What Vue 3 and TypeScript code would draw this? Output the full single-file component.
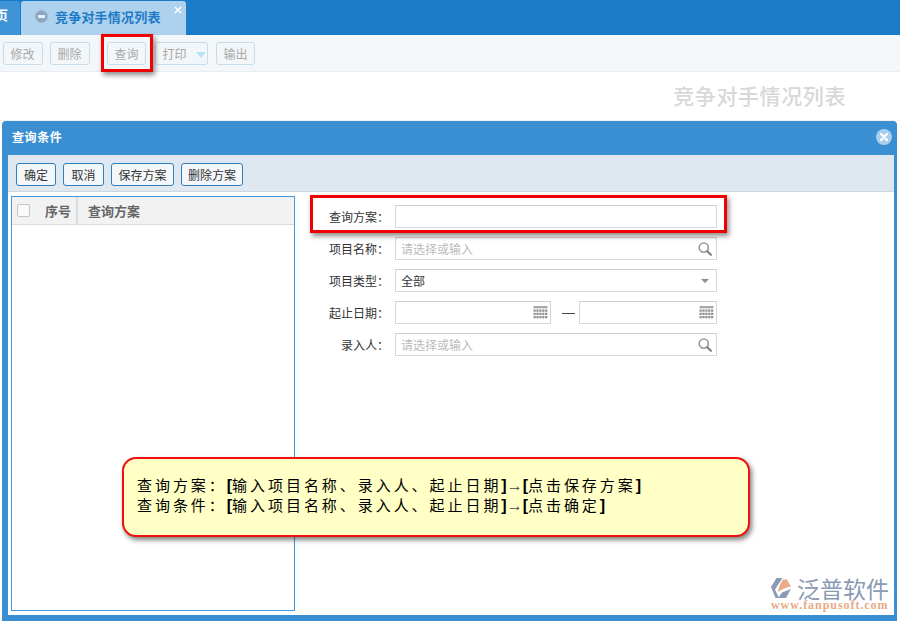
<script setup lang="ts">
const topButtons = [
  { label: '修改', width: 40, gap: 7 },
  { label: '删除', width: 40, gap: 17 },
  { label: '查询', width: 39, gap: 9 },
  { label: '打印', width: 53, gap: 8, arrow: true },
  { label: '输出', width: 39, gap: 0 },
]
const dialogButtons = [
  { label: '确定', width: 40 },
  { label: '取消', width: 41 },
  { label: '保存方案', width: 63 },
  { label: '删除方案', width: 62 },
]
const notes = [
  { head: '查询方案：', body: '输入项目名称、录入人、起止日期', action: '点击保存方案' },
  { head: '查询条件：', body: '输入项目名称、录入人、起止日期', action: '点击确定' },
]
</script>

<template>
  <div class="screen">
    <header class="tabbar">
      <div class="tab-home">页</div>
      <div class="tab-active">
        <span class="tab-dot"><i></i></span>
        <span class="tab-title">竞争对手情况列表</span>
        <svg class="tab-x" width="8" height="8" viewBox="0 0 8 8"><path d="M1 1l6 6M7 1l-6 6" stroke="#fff" stroke-width="1.6" /></svg>
      </div>
    </header>

    <div class="toolbar">
      <button
        v-for="b in topButtons"
        :key="b.label"
        class="tool-btn"
        :style="{ width: b.width + 'px', marginRight: b.gap + 'px' }"
      >
        {{ b.label }}<i v-if="b.arrow" class="tool-arrow"></i>
      </button>
    </div>

    <div class="page-head"><h1>竞争对手情况列表</h1></div>

    <section class="dialog">
      <div class="dialog-title">
        <span>查询条件</span>
        <svg width="16" height="16" viewBox="0 0 16 16">
          <circle cx="8" cy="8" r="8" fill="#a9cfee" />
          <path d="M5 5l6 6M11 5l-6 6" stroke="#fff" stroke-width="2.2" stroke-linecap="round" />
        </svg>
      </div>
      <div class="dialog-body">
        <div class="dialog-tools">
          <button v-for="b in dialogButtons" :key="b.label" class="dlg-btn" :style="{ width: b.width + 'px' }">{{ b.label }}</button>
        </div>
        <div class="dialog-main">
          <div class="plan-table">
            <div class="plan-head">
              <span class="col-check"><i></i><b>序号</b></span>
              <span class="col-name">查询方案</span>
            </div>
          </div>
          <form class="form">
            <div class="row">
              <label>查询方案：</label>
              <div class="field wide"></div>
            </div>
            <div class="row">
              <label>项目名称：</label>
              <div class="field wide hint">
                请选择或输入
                <svg class="end" width="16" height="16" viewBox="0 0 16 16"><circle cx="6.8" cy="6.6" r="4.6" fill="#fff" stroke="#9a9a9a" stroke-width="1.6" /><path d="M10.3 10.2l3.6 3.6" stroke="#808080" stroke-width="2.2" stroke-linecap="round" /></svg>
              </div>
            </div>
            <div class="row">
              <label>项目类型：</label>
              <div class="field wide">
                全部
                <i class="select-arrow"></i>
              </div>
            </div>
            <div class="row">
              <label>起止日期：</label>
              <div class="field date-a">
                <svg class="end cal" width="15" height="14" viewBox="0 0 15 15"><rect x="0" y="0" width="15" height="2.500" fill="#a8a8a8" /><path d="M0 5h15M0 8.400h15M0 11.800h15" stroke="#8f8f8f" stroke-width="2.400" stroke-dasharray="2.400 .7" /></svg>
              </div>
              <span class="dash"></span>
              <div class="field date-b">
                <svg class="end cal" width="15" height="14" viewBox="0 0 15 15"><rect x="0" y="0" width="15" height="2.500" fill="#a8a8a8" /><path d="M0 5h15M0 8.400h15M0 11.800h15" stroke="#8f8f8f" stroke-width="2.400" stroke-dasharray="2.400 .7" /></svg>
              </div>
            </div>
            <div class="row">
              <label>录入人：</label>
              <div class="field wide hint">
                请选择或输入
                <svg class="end" width="16" height="16" viewBox="0 0 16 16"><circle cx="6.8" cy="6.6" r="4.6" fill="#fff" stroke="#9a9a9a" stroke-width="1.6" /><path d="M10.3 10.2l3.6 3.6" stroke="#808080" stroke-width="2.2" stroke-linecap="round" /></svg>
              </div>
            </div>
          </form>
        </div>
      </div>
    </section>

    <div class="mark mark-query"></div>
    <div class="mark mark-plan"></div>

    <aside class="callout">
      <p v-for="n in notes" :key="n.head">{{ n.head }}<b>[</b>{{ n.body }}<b>]</b><span class="arrow">→</span><b>[</b>{{ n.action }}<b>]</b></p>
    </aside>

    <div class="logo">
      <div class="logo-top">
        <svg width="24" height="23" viewBox="0 0 24 23">
          <path d="M0 10L5.500 1H11.500L4 12.500L8 21H4.500Z" fill="#8b9bb4" />
          <path d="M12 2.500H16L20 9.500Q13 10.500 7 15Q8 8 12 2.500Z" fill="#e9ab8a" />
          <path d="M11 15.500L20 12L15 21H7Z" fill="#8b9bb4" />
        </svg>
        <span>泛普软件</span>
      </div>
      <div class="logo-url">www.fanpusoft.com</div>
    </div>
  </div>
</template>

<style>
html, body { margin: 0; padding: 0; background: #fff; overflow: hidden; }
</style>

<style scoped>
.screen {
  position: relative;
  width: 900px;
  height: 622px;
  overflow: hidden;
  background: #fff;
  font-family: "Noto Sans CJK SC", "Liberation Sans", sans-serif;
  font-size: 12px;
  color: #333;
}
.tabbar {
  display: flex;
  height: 35px;
  background: #1a7bc8;
}
.tab-home {
  width: 20px;
  margin-top: 1px;
  padding-top: 6px;
  box-sizing: border-box;
  background: #3f94d8;
  border-radius: 0 3px 0 0;
  color: #fff;
  font-size: 13px;
  font-weight: 700;
  line-height: 16px;
  text-indent: -5px;
  overflow: hidden;
}
.tab-active {
  position: relative;
  display: flex;
  align-items: center;
  width: 165px;
  margin: 1px 0 0 1px;
  background: #aed1ee;
  border-radius: 3px 3px 0 0;
  padding: 0 0 4px 14px;
  box-sizing: border-box;
  height: 34px;
}
.tab-dot {
  display: flex;
  align-items: center;
  justify-content: center;
  width: 11px;
  height: 11px;
  border-radius: 50%;
  background: #8ba6c2;
  border: 1px solid #9eb6cf;
  margin-right: 7px;
}
.tab-dot i {
  display: block;
  width: 7px;
  height: 3px;
  background: #e8f1f9;
}
.tab-title {
  color: #1c7ac6;
  font-size: 13px;
  font-weight: 700;
  letter-spacing: .2px;
}
.tab-x {
  position: absolute;
  top: 5px;
  right: 4px;
}
.toolbar {
  display: flex;
  align-items: center;
  height: 37px;
  padding: 1px 0 0 3px;
  box-sizing: border-box;
  background: #f4f7fa;
  border-bottom: 1px solid #e8edf2;
}
.tool-btn {
  display: flex;
  align-items: center;
  height: 23px;
  padding: 0 0 0 6.500px;
  box-sizing: border-box;
  border: 1px solid #c8dbe9;
  border-radius: 3px;
  background: #f4f7fa;
  color: #a8a8a8;
  font: inherit;
  font-size: 12px;
}
.tool-arrow {
  width: 0;
  height: 0;
  margin: 2px 0 0 9px;
  border-left: 5px solid transparent;
  border-right: 5px solid transparent;
  border-top: 6px solid #b5e3f7;
}
.page-head {
  display: flex;
  justify-content: flex-end;
  align-items: center;
  height: 49px;
  padding: 0 54px 3px 0;
  box-sizing: border-box;
  border-bottom: 1px solid #f0f0f0;
}
.page-head h1 {
  margin: 0;
  color: #d8d8d8;
  font-size: 21px;
  font-weight: 500;
  line-height: 44px;
  letter-spacing: .6px;
}
.dialog {
  display: flex;
  flex-direction: column;
  width: 895px;
  height: 500px;
  margin-left: 2px;
  box-sizing: border-box;
  padding: 0 3px 6px 6px;
  background: #3a8fd3;
  border-radius: 4px 4px 0 0;
}
.dialog-title {
  display: flex;
  align-items: center;
  justify-content: space-between;
  height: 34px;
  flex: none;
  color: #fff;
  font-size: 12px;
  font-weight: 700;
  letter-spacing: .6px;
  padding: 0 2px 3px 4px;
  box-sizing: border-box;
}
.dialog-body {
  flex: 1;
  display: flex;
  flex-direction: column;
  min-height: 0;
  background: #fff;
}
.dialog-tools {
  display: flex;
  gap: 7px;
  align-items: center;
  height: 37px;
  flex: none;
  padding: 2px 0 0 8px;
  box-sizing: border-box;
  background: #dfe8f1;
  border-bottom: 1px solid #ccd7e2;
}
.dlg-btn {
  height: 23px;
  padding: 0;
  box-sizing: border-box;
  border: 1px solid #2f7fbf;
  border-radius: 3px;
  background: #f4f7fa;
  color: #333;
  font: inherit;
  font-size: 12px;
}
.dialog-main {
  flex: 1;
  display: flex;
  min-height: 0;
}
.plan-table {
  width: 284px;
  margin: 4px 0 4px 3px;
  box-sizing: border-box;
  border: 1px solid #3f9ae0;
  background: #fff;
}
.plan-head {
  display: flex;
  height: 28px;
  box-sizing: border-box;
  background: #f2f2f2;
  border-bottom: 1px solid #dcdcdc;
  color: #666;
  font-size: 13px;
  font-weight: 700;
  line-height: 27px;
}
.col-check {
  display: flex;
  align-items: center;
  width: 66px;
  padding-left: 5px;
  box-sizing: border-box;
  border-right: 2px solid #dcdcdc;
}
.col-check i {
  width: 11px;
  height: 11px;
  border: 1px solid #c4c4c4;
  border-radius: 2px;
  background: #fafafa;
  margin-right: 15px;
}
.col-check b {
  font-weight: 700;
}
.col-name {
  padding-left: 10px;
}
.form {
  display: flex;
  flex-direction: column;
  gap: 9px;
  padding: 13px 0 0 10px;
  margin: 0;
}
.row {
  display: flex;
  align-items: center;
  height: 23px;
}
.row label {
  width: 90px;
  padding-right: 6px;
  box-sizing: border-box;
  text-align: right;
  color: #333;
  flex: none;
}
.field {
  position: relative;
  height: 23px;
  box-sizing: border-box;
  border: 1px solid #d6d6d6;
  border-top-color: #cfcfcf;
  padding-left: 5px;
  line-height: 22px;
  color: #333;
  background: #fff;
}
.wide { width: 322px; }
.date-a { width: 156px; }
.date-b { width: 138px; }
.hint { color: #bbb; }
.end {
  position: absolute;
  top: 3px;
  right: 3px;
}
.cal { top: 4px; right: 2px; }
.select-arrow {
  position: absolute;
  top: 9px;
  right: 7px;
  width: 0;
  height: 0;
  border-left: 4px solid transparent;
  border-right: 4px solid transparent;
  border-top: 4px solid #8c8c8c;
}
.dash {
  width: 13px;
  height: 1px;
  margin: 1px 4px 0 11px;
  background: #444;
  flex: none;
}
.mark {
  position: absolute;
  box-sizing: border-box;
  border: 3px solid #f00000;
  box-shadow: 2px 3px 5px rgba(0, 0, 0, .45);
}
.mark-query {
  left: 101px;
  top: 34px;
  width: 52px;
  height: 38px;
}
.mark-plan {
  left: 310px;
  top: 195px;
  width: 417px;
  height: 38px;
}
.callout {
  position: absolute;
  left: 122px;
  top: 457px;
  width: 628px;
  height: 80px;
  box-sizing: border-box;
  padding: 16px 0 0 13px;
  background: #ffffc6;
  border: 2px solid #f01010;
  border-radius: 14px;
  box-shadow: 2px 3px 5px rgba(0, 0, 0, .5);
  color: #000;
}
.callout p {
  margin: 0;
  height: 20px;
  font-size: 15px;
  line-height: 20px;
  letter-spacing: 2.950px;
  white-space: nowrap;
}
.callout b {
  font-weight: 900;
  font-size: 16px;
  letter-spacing: 0;
  line-height: 0;
  color: #000;
  font-family: "Liberation Sans", sans-serif;
}
.callout .arrow {
  font-size: 16px;
  line-height: 0;
  letter-spacing: 0;
  color: #444;
  font-family: "Liberation Sans", sans-serif;
}
.logo {
  position: absolute;
  left: 771px;
  top: 577px;
  width: 122px;
}
.logo-top {
  display: flex;
  align-items: center;
  height: 23px;
  color: #8a9ab3;
  font-size: 23px;
  line-height: 23px;
  white-space: nowrap;
}
.logo-top svg { flex: none; margin-right: 2px; }
.logo-url {
  color: #e7a988;
  font-family: "Liberation Serif", serif;
  font-weight: 700;
  font-size: 12px;
  line-height: 11px;
  letter-spacing: .95px;
  white-space: nowrap;
}
</style>
